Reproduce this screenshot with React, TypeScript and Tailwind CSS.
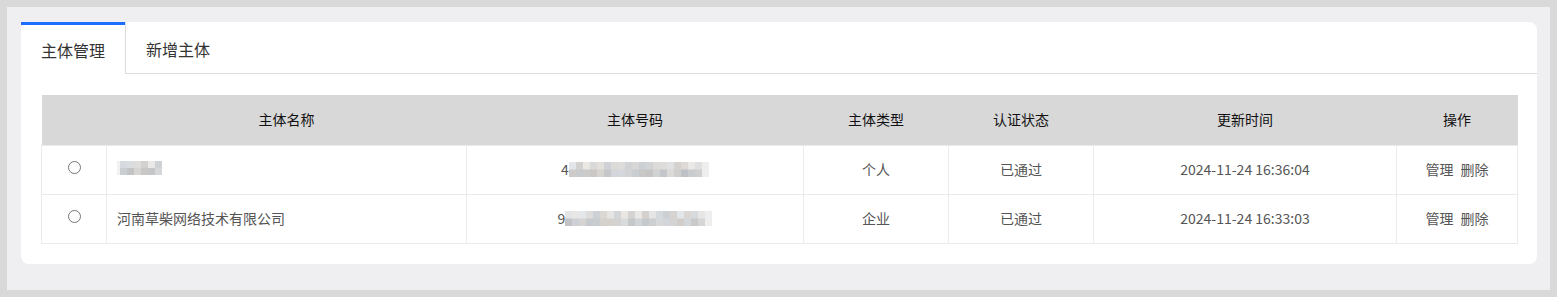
import React from "react";

const FONT = { fontFamily: '"Microsoft YaHei", "Noto Sans CJK SC", "Noto Sans", sans-serif' };

function rng(seed: number) {
  let s = seed;
  return () => {
    s = (s * 9301 + 49297) % 233280;
    return s / 233280;
  };
}

function Mosaic({ cols, seed, cell = 7, h = 15, fadeLast = false }: { cols: number; seed: number; cell?: number; h?: number; fadeLast?: boolean }) {
  const r = rng(seed);
  const rows = 2;
  const ch = h / rows;
  const rects: React.ReactElement[] = [];
  for (let y = 0; y < rows; y++) {
    for (let x = 0; x < cols; x++) {
      const base = y === 0 ? 220 : 206;
      let v = Math.round(base + (r() - 0.5) * 26);
      const tint = Math.round((r() - 0.5) * 10);
      if (fadeLast && x === cols - 1) v = 238;
      const c = `rgb(${v - tint},${v},${v + tint})`;
      rects.push(<rect key={`${x}-${y}`} x={x * cell} y={y * ch} width={cell + 0.5} height={ch + 0.5} fill={c} />);
    }
  }
  return (
    <svg width={cols * cell} height={h} className="inline-block align-middle" viewBox={`0 0 ${cols * cell} ${h}`}>
      {rects}
    </svg>
  );
}

function Radio() {
  return (
    <div className="flex justify-center items-center">
      <div className="w-[13px] h-[13px] rounded-full border border-[#767676] bg-white mb-[4px]" />
    </div>
  );
}

const headers = ["", "主体名称", "主体号码", "主体类型", "认证状态", "更新时间", "操作"];
const widths = ["w-[65px]", "w-[360px]", "w-[337px]", "w-[145px]", "w-[145px]", "w-[303px]", "w-[121px]"];

export default function App() {
  const rows = [
    { name: null as string | null, numLead: "4", cols: 20, seed: 17, type: "个人", status: "已通过", time: "2024-11-24 16:36:04" },
    { name: "河南草柴网络技术有限公司", numLead: "9", cols: 21, seed: 91, type: "企业", status: "已通过", time: "2024-11-24 16:33:03" },
  ];
  return (
    <div style={FONT} className="w-[1557px] h-[297px] bg-[#efeff1] border-[7px] border-[#d9d9d9] pt-[15px] pl-[14px] pr-[13px]">
      <div className="bg-white rounded-lg">
        <div className="flex h-[52px]">
          <div className="w-[104px] h-[52px] border-t-[3px] border-[#1e6fff] flex items-center justify-center text-[16px] text-[#333]">
            主体管理
          </div>
          <div className="h-[52px] border-l border-b border-[#dcdcdc] pl-[20px] pr-[20px] pt-[3px] flex items-center text-[16px] text-[#333]">
            新增主体
          </div>
          <div className="flex-1 border-b border-[#dcdcdc] rounded-tr-lg" />
        </div>
        <div className="px-[20px] pt-[21px] pb-[20px]">
          <table className="table-fixed border-collapse w-[1476px] text-[14px]">
            <thead>
              <tr className="bg-[#d8d8d8]">
                {headers.map((h, i) => (
                  <th key={i} className={`${widths[i]} h-[50px] font-normal text-[#111] text-center`}>
                    {h}
                  </th>
                ))}
              </tr>
            </thead>
            <tbody className="text-[#555]">
              {rows.map((r, i) => (
                <tr key={i} className="h-[49px]">
                  <td className="border border-[#ebebeb]">
                    <Radio />
                  </td>
                  <td className="border border-[#ebebeb] pl-[10px] text-left">
                    {r.name ? (
                      r.name
                    ) : (
                      <span className="inline-flex items-center">
                        <span className="inline-block w-[3px] h-[14px] bg-[#f3f1ef]" />
                        <Mosaic cols={6} seed={5} h={14} />
                      </span>
                    )}
                  </td>
                  <td className="border border-[#ebebeb] text-center">
                    <span className="inline-flex items-center">
                      <span>{r.numLead}</span>
                      <Mosaic cols={r.cols} seed={r.seed} fadeLast />
                    </span>
                  </td>
                  <td className="border border-[#ebebeb] text-center">{r.type}</td>
                  <td className="border border-[#ebebeb] text-center">{r.status}</td>
                  <td className="border border-[#ebebeb] text-center">{r.time}</td>
                  <td className="border border-[#ebebeb] text-center">
                    <span>管理</span>
                    <span className="ml-[7px]">删除</span>
                  </td>
                </tr>
              ))}
            </tbody>
          </table>
        </div>
      </div>
    </div>
  );
}
